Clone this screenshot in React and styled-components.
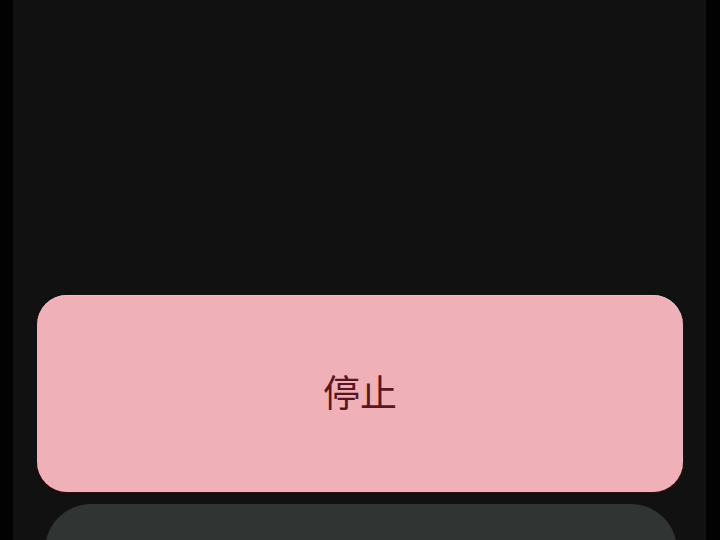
import React from 'react';
import styled, { createGlobalStyle } from 'styled-components';

const GlobalStyle = createGlobalStyle`
    html, body {
        margin: 0;
        padding: 0;
        background: #020202;
        overflow: hidden;
    }
    body {
        font-family: "Noto Sans CJK SC", "Noto Sans", sans-serif;
    }
`;

const Screen = styled.div`
    width: 720px;
    height: 540px;
    display: flex;
    background: #020202;
`;

const Panel = styled.div`
    margin-left: 13px;
    width: 693px;
    height: 540px;
    background: #111111;
    display: flex;
    flex-direction: column;
    padding-top: 295px;
    box-sizing: border-box;
    overflow: hidden;
`;

const ActionButton = styled.button`
    flex: none;
    margin: ${p => p.$inset};
    height: ${p => p.$height}px;
    border: none;
    border-radius: ${p => p.$radius}px;
    background: ${p => p.$bg};
    color: ${p => p.$fg};
    font-family: "Noto Sans CJK SC", "Noto Sans", sans-serif;
    font-size: 37px;
    font-weight: 400;
    display: flex;
    align-items: center;
    justify-content: center;
    padding: 0 0 5px 0;
    box-shadow: ${p => p.$shadow};
`;

export default function App() {
    return (
        <Screen>
            <GlobalStyle />
            <Panel>
                <ActionButton
                    $inset="0 23px 0 24px"
                    $height={197}
                    $radius={30}
                    $bg="#efb0b7"
                    $fg="#5a1620"
                    $shadow="inset 0 1px 0 #e6c4c8, 1px 1px 0 #3a0a10, 0 2px 0 #2a0508"
                >
                    停止
                </ActionButton>
                <ActionButton
                    $inset="12px 29px 0 32px"
                    $height={120}
                    $radius={46}
                    $bg="#303432"
                    $fg="#e0e0e0"
                    $shadow="none"
                />
            </Panel>
        </Screen>
    );
}
